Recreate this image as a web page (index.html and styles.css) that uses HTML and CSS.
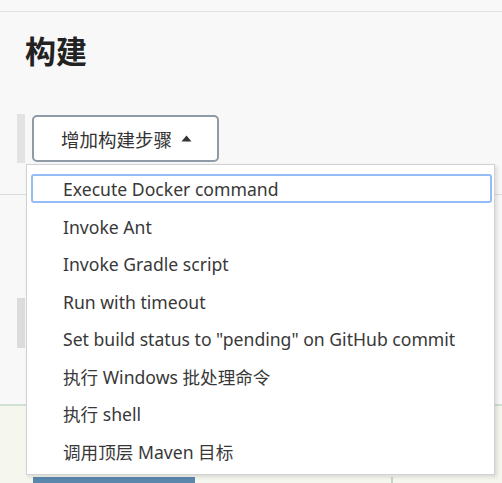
FILE: index.html
```html
<!DOCTYPE html>
<html lang="zh-CN">
<head>
<meta charset="utf-8">
<link rel="stylesheet" href="styles.css">
</head>
<body>
<div class="page">
  <div class="topline"></div>
  <section class="build">
    <h1 class="title">构建</h1>
    <div class="step-row">
      <div class="rail"></div>
      <button class="add-btn">增加构建步骤<svg class="caret" width="11" height="7" viewBox="0 0 11 7"><path d="M0.5 6.5 L5.5 0.5 L10.5 6.5 Z" fill="#333"/></svg></button>
    </div>
    <div class="divider"></div>
    <div class="rail-block"></div>
  </section>
  <section class="post">
    <div class="blue-bar"></div>
    <div class="thin-mark"></div>
  </section>

  <ul class="menu">
    <li class="item"><span class="item-inner focused">Execute Docker command</span></li>
    <li class="item"><span class="item-inner">Invoke Ant</span></li>
    <li class="item"><span class="item-inner">Invoke Gradle script</span></li>
    <li class="item"><span class="item-inner">Run with timeout</span></li>
    <li class="item"><span class="item-inner">Set build status to "pending" on GitHub commit</span></li>
    <li class="item"><span class="item-inner">执行 Windows 批处理命令</span></li>
    <li class="item"><span class="item-inner">执行 shell</span></li>
    <li class="item"><span class="item-inner">调用顶层 Maven 目标</span></li>
  </ul>
</div>
</body>
</html>
```

FILE: styles.css
```css
html, body {
  margin: 0;
  padding: 0;
}
body {
  background: #f8f8f8;
  font-family: "Noto Sans", "Noto Sans CJK SC", sans-serif;
  color: #333;
}
.page {
  position: relative;
  width: 502px;
  height: 483px;
  overflow: hidden;
}
.topline {
  height: 11px;
  border-bottom: 1px solid #e2e2e2;
}
.build {
  padding-left: 25px;
  height: 392px;
  display: flex;
  flex-direction: column;
}
.title {
  margin: 0;
  padding-top: 16px;
  height: 91px;
  box-sizing: border-box;
  font-family: "Noto Sans CJK SC", sans-serif;
  font-size: 31px;
  font-weight: 700;
  line-height: 44px;
  color: #222;
  flex: none;
}
.step-row {
  display: flex;
  margin-left: -8px;
  gap: 7px;
  height: 49px;
  padding-top: 11px;
  flex: none;
}
.rail {
  width: 8px;
  height: 49px;
  background: #e3e3e3;
}
.add-btn {
  width: 187px;
  height: 47px;
  box-sizing: border-box;
  margin-top: 1px;
  border: 2px solid #8e9aa5;
  border-radius: 5px;
  background: #fff;
  display: flex;
  align-items: center;
  justify-content: center;
  gap: 9px;
  padding: 0 0 0 2px;
  font-family: "Noto Sans CJK SC", sans-serif;
  font-size: 18.5px;
  color: #333;
}
.caret {
  display: block;
}
.divider {
  margin-left: -25px;
  margin-top: 31px;
  border-top: 1px solid #dcdcdc;
  flex: none;
}
.rail-block {
  margin-left: -8px;
  margin-top: 103px;
  width: 8px;
  height: 50px;
  background: #dcdcdc;
  flex: none;
}
.post {
  border-top: 2px solid #cfe0d6;
  background: #f5f6ee;
  height: 79px;
  display: flex;
  align-items: flex-end;
  gap: 196px;
}
.blue-bar {
  margin-left: 33px;
  width: 162px;
  height: 8px;
  background: #5b87ad;
}
.thin-mark {
  width: 2px;
  height: 8px;
  background: #c7d2cc;
}
.menu {
  position: absolute;
  left: 26px;
  top: 164px;
  width: 469px;
  height: 311px;
  box-sizing: border-box;
  margin: 0;
  padding: 5px 0 0;
  list-style: none;
  background: #fff;
  border: 1px solid #d2d2d2;
  box-shadow: 2px 2px 4px rgba(0, 0, 0, 0.12);
}
.item {
  padding: 4.25px 2px 4.25px 4px;
}
.item-inner {
  display: block;
  height: 29px;
  box-sizing: border-box;
  border: 2px solid transparent;
  border-radius: 3px;
  padding-left: 30px;
  padding-top: 1px;
  line-height: 25px;
  font-size: 17.6px;
  color: #383838;
  white-space: nowrap;
}
.item-inner.focused {
  border-color: #94bcf6;
}
```
